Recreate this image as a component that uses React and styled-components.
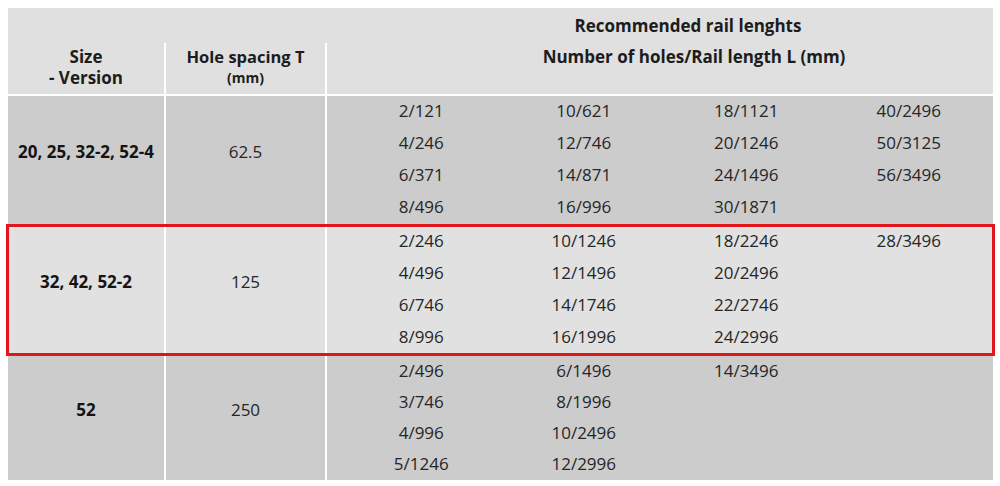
import React from "react";
import styled, { createGlobalStyle } from "styled-components";

const Global = createGlobalStyle`
  html, body { margin: 0; padding: 0; background: #ffffff; }
  body { font-family: "Open Sans", "Noto Sans", Arial, sans-serif; color: #1c1c1c; }
`;

const Page = styled.div`
  width: 1000px;
  height: 486px;
  box-sizing: border-box;
  padding: 8px 7px 0 8px;
  background: #ffffff;
`;

const Table = styled.div`
  display: grid;
  grid-template-columns: 156px 159px 1fr;
  column-gap: 2px;
  row-gap: 2px;
  background: #ffffff;
`;

const Header = styled.div`
  grid-column: 1 / -1;
  display: grid;
  grid-template-columns: 156px 159px 1fr;
  grid-template-rows: 35px 51px;
  column-gap: 2px;
`;

const HeaderTop = styled.div`
  grid-column: 1 / -1;
  background: #e0e0e0;
  display: flex;
  align-items: center;
  justify-content: center;
  padding-left: 375px;
  font-weight: 700;
  font-size: 17px;
`;

const HeaderCell = styled.div`
  background: #e0e0e0;
  display: flex;
  flex-direction: column;
  align-items: center;
  padding-top: 3px;
  padding-left: ${(p) => p.$shift || 0}px;
  font-weight: 700;
  font-size: ${(p) => p.$size || 17}px;
  line-height: 21px;
`;

const Unit = styled.span`
  font-size: 14px;
`;

const Group = styled.div`
  grid-column: 1 / -1;
  display: grid;
  grid-template-columns: 156px 159px 1fr;
  column-gap: 2px;
  position: relative;
  z-index: ${(p) => (p.$marked ? 1 : 0)};
  outline: ${(p) => (p.$marked ? "3px solid #e0161b" : "none")};
  outline-offset: -1px;
`;

const Cell = styled.div`
  background: ${(p) => (p.$light ? "#e1e1e1" : "#cccccc")};
  display: flex;
  align-items: center;
  justify-content: center;
  padding-bottom: 18px;
  font-size: 17px;
  font-weight: ${(p) => (p.$bold ? 700 : 400)};
  color: ${(p) => (p.$bold ? "#141414" : "#262626")};
`;

const Values = styled.div`
  background: ${(p) => (p.$light ? "#e1e1e1" : "#cccccc")};
  display: grid;
  grid-template-columns: repeat(4, 1fr);
  grid-template-rows: repeat(4, ${(p) => p.$row}px);
  grid-auto-flow: column;
  padding: 0 3px 0 13px;
`;

const Value = styled.div`
  display: flex;
  align-items: center;
  justify-content: center;
  padding-bottom: 3px;
  font-size: 17px;
  color: #262626;
`;

const groups = [
  {
    size: "20, 25, 32-2, 52-4",
    spacing: "62.5",
    row: 32,
    cols: [
      ["2/121", "4/246", "6/371", "8/496"],
      ["10/621", "12/746", "14/871", "16/996"],
      ["18/1121", "20/1246", "24/1496", "30/1871"],
      ["40/2496", "50/3125", "56/3496", ""],
    ],
  },
  {
    size: "32, 42, 52-2",
    spacing: "125",
    row: 32,
    marked: true,
    cols: [
      ["2/246", "4/496", "6/746", "8/996"],
      ["10/1246", "12/1496", "14/1746", "16/1996"],
      ["18/2246", "20/2496", "22/2746", "24/2996"],
      ["28/3496", "", "", ""],
    ],
  },
  {
    size: "52",
    spacing: "250",
    row: 31,
    cols: [
      ["2/496", "3/746", "4/996", "5/1246"],
      ["6/1496", "8/1996", "10/2496", "12/2996"],
      ["14/3496", "", "", ""],
      ["", "", "", ""],
    ],
  },
];

export default function App() {
  return (
    <Page>
      <Global />
      <Table>
        <Header>
          <HeaderTop>Recommended rail lenghts</HeaderTop>
          <HeaderCell>
            <span>Size</span>
            <span>- Version</span>
          </HeaderCell>
          <HeaderCell $size={16.5}>
            <span>Hole spacing T</span>
            <Unit>(mm)</Unit>
          </HeaderCell>
          <HeaderCell $size={17} $shift={68}>
            <span>Number of holes/Rail length L (mm)</span>
          </HeaderCell>
        </Header>
        {groups.map((g) => (
          <Group key={g.size} $marked={g.marked}>
            <Cell $bold $light={g.marked}>{g.size}</Cell>
            <Cell $light={g.marked}>{g.spacing}</Cell>
            <Values $light={g.marked} $row={g.row}>
              {g.cols.flat().map((v, i) => (
                <Value key={i}>{v}</Value>
              ))}
            </Values>
          </Group>
        ))}
      </Table>
    </Page>
  );
}
